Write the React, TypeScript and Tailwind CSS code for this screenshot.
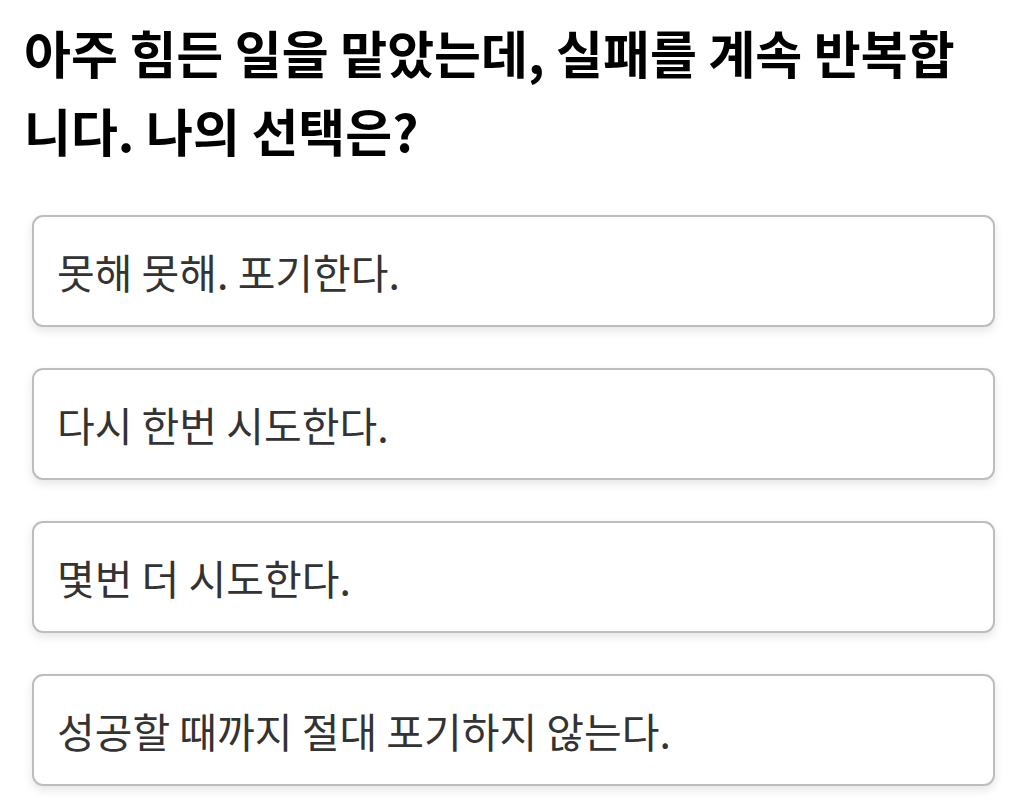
import React from "react";

const options = [
  "못해 못해. 포기한다.",
  "다시 한번 시도한다.",
  "몇번 더 시도한다.",
  "성공할 때까지 절대 포기하지 않는다.",
];

export default function App() {
  return (
    <div
      className="min-h-screen bg-white px-[24px] pt-[13px]"
      style={{ fontFamily: '"Noto Sans CJK KR", "Noto Sans", sans-serif' }}
    >
      <h1 className="w-[960px] text-[51px] font-bold leading-[78px] text-black">
        아주 힘든 일을 맡았는데, 실패를 계속 반복합니다. 나의 선택은?
      </h1>
      <div className="mt-[46px] flex flex-col gap-[41px] pl-[8px] pr-[12px]">
        {options.map((o) => (
          <div
            key={o}
            className="flex h-[112px] items-center rounded-[11px] border-2 border-[#bdbdbd] bg-white px-[23px] text-[41px] leading-[60px] text-[#333333] shadow-[0_4px_10px_rgba(0,0,0,0.10)]"
          >
            {o}
          </div>
        ))}
      </div>
    </div>
  );
}
